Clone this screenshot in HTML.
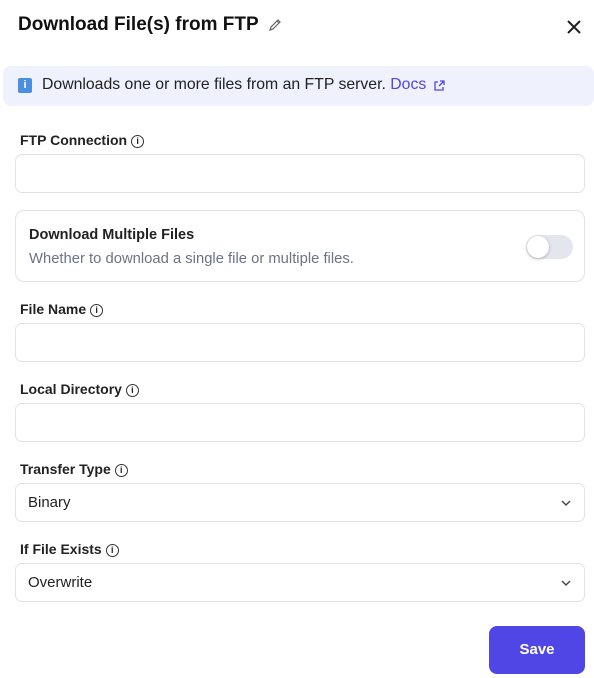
<!DOCTYPE html>
<html><head><style>
*{box-sizing:border-box;margin:0;padding:0}
body{width:594px;height:678px;background:#fff;font-family:"Liberation Sans",sans-serif;color:#1f2328;position:relative;overflow:hidden}
.abs{position:absolute}
.title{left:18px;top:14px;font-size:19px;font-weight:bold;color:#111}
.banner{left:3px;top:66px;width:591px;height:40px;background:#eff1fc;border-radius:8px}
.banner span.t{position:absolute;left:39px;top:10px;font-size:15.8px;color:#222}
.lbl{left:20px;font-size:14px;font-weight:bold;color:#222}
.info{display:inline-block;width:13px;height:13px;border:1.3px solid #333;border-radius:50%;font-size:9px;text-align:center;line-height:11px;font-weight:bold;margin-left:4px;vertical-align:1px}
.inp{left:15px;width:570px;height:39px;border:1px solid #dfe2e8;border-radius:7px}
.sel span{position:absolute;left:12px;top:10px;font-size:15px;color:#222}
.chev{position:absolute;right:12px;top:13px}
</style></head><body>
<div class="abs title">Download File(s) from FTP</div>
<svg class="abs" style="left:267px;top:17px" width="16" height="16" viewBox="0 0 16 16"><path d="M3 13l1-3 7-7 2 2-7 7z M10 4l2 2" fill="none" stroke="#666" stroke-width="1.2"/></svg>
<svg class="abs" style="left:566px;top:19px" width="16" height="16" viewBox="0 0 16 16"><path d="M2 2l12 12M14 2L2 14" stroke="#222" stroke-width="2"/></svg>
<div class="abs banner"><div class="abs" style="left:15px;top:12px;width:14px;height:15px;background:#4a8fe0;border-radius:2px;color:#fff;font-size:11px;font-weight:bold;text-align:center;line-height:15px">i</div><span class="t">Downloads one or more files from an FTP server. <span style="color:#5046e5">Docs</span></span>
<svg class="abs" style="left:430px;top:14px" width="12" height="12" viewBox="0 0 12 12"><path d="M5 2H2v8h8V7M7 1h4v4M11 1L6 6" fill="none" stroke="#5046e5" stroke-width="1.3"/></svg></div>
<div class="abs lbl" style="top:132px">FTP Connection<span class="info">i</span></div>
<div class="abs inp" style="top:154px"></div>
<div class="abs" style="left:15px;top:210px;width:570px;height:72px;border:1px solid #dfe2e8;border-radius:9px">
<div class="abs" style="left:13px;top:16px;font-size:14.5px;font-weight:bold;color:#222">Download Multiple Files</div>
<div class="abs" style="left:13px;top:40px;font-size:14.8px;color:#6b7385">Whether to download a single file or multiple files.</div>
<div class="abs" style="left:510px;top:24px;width:47px;height:24px;border-radius:12px;background:#e3e6ec"><div class="abs" style="left:1px;top:1px;width:22px;height:22px;border-radius:50%;background:#fff;box-shadow:0 1px 3px rgba(0,0,0,.25)"></div></div>
</div>
<div class="abs lbl" style="top:301px">File Name<span class="info">i</span></div>
<div class="abs inp" style="top:323px"></div>
<div class="abs lbl" style="top:381px">Local Directory<span class="info">i</span></div>
<div class="abs inp" style="top:403px"></div>
<div class="abs lbl" style="top:461px">Transfer Type<span class="info">i</span></div>
<div class="abs inp sel" style="top:483px"><span>Binary</span><svg class="chev" width="12" height="12" viewBox="0 0 12 12"><path d="M2 4l4 4 4-4" fill="none" stroke="#444" stroke-width="1.4"/></svg></div>
<div class="abs lbl" style="top:541px">If File Exists<span class="info">i</span></div>
<div class="abs inp sel" style="top:563px"><span>Overwrite</span><svg class="chev" width="12" height="12" viewBox="0 0 12 12"><path d="M2 4l4 4 4-4" fill="none" stroke="#444" stroke-width="1.4"/></svg></div>
<div class="abs" style="left:489px;top:626px;width:96px;height:48px;background:#5046e5;border-radius:8px;color:#fff;font-weight:bold;font-size:15px;text-align:center;line-height:48px">Save</div>
</body></html>
